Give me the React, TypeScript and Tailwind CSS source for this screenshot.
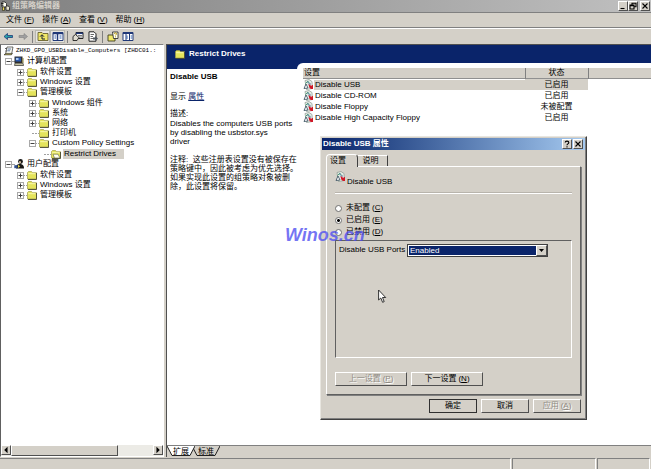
import React from 'react';

const NAVY = 'bg-[#0a246a]';
const RAISED = 'border border-t-white border-l-white border-r-[#505050] border-b-[#505050] bg-[#d4d0c8]';

interface Node {
  label: string;
  icon: 'folder' | 'open' | 'computer' | 'user';
  toggle?: '+' | '-';
  selected?: boolean;
  children?: Node[];
}

const tree: Node[] = [
  {
    label: '计算机配置',
    icon: 'computer',
    toggle: '-',
    children: [
      { label: '软件设置', icon: 'folder', toggle: '+' },
      { label: 'Windows 设置', icon: 'folder', toggle: '+' },
      {
        label: '管理模板',
        icon: 'folder',
        toggle: '-',
        children: [
          { label: 'Windows 组件', icon: 'folder', toggle: '+' },
          { label: '系统', icon: 'folder', toggle: '+' },
          { label: '网络', icon: 'folder', toggle: '+' },
          { label: '打印机', icon: 'folder' },
          {
            label: 'Custom Policy Settings',
            icon: 'folder',
            toggle: '-',
            children: [{ label: 'Restrict Drives', icon: 'open', selected: true }]
          }
        ]
      }
    ]
  },
  {
    label: '用户配置',
    icon: 'user',
    toggle: '-',
    children: [
      { label: '软件设置', icon: 'folder', toggle: '+' },
      { label: 'Windows 设置', icon: 'folder', toggle: '+' },
      { label: '管理模板', icon: 'folder', toggle: '+' }
    ]
  }
];

const settings = [
  { name: 'Disable USB', state: '已启用', selected: true },
  { name: 'Disable CD-ROM', state: '已启用' },
  { name: 'Disable Floppy', state: '未被配置' },
  { name: 'Disable High Capacity Floppy', state: '已启用' }
];

const menus = [
  { label: '文件', hotkey: 'F' },
  { label: '操作', hotkey: 'A' },
  { label: '查看', hotkey: 'V' },
  { label: '帮助', hotkey: 'H' }
];

const FolderIcon = ({ open = false }: { open?: boolean }) => (
  <svg className="h-[9px] w-[10px] shrink-0" viewBox="0 0 10 9">
    <path d="M.5 8V1.5L1.5.5h3l1 1.2h4V8z" fill="#e4e45c" stroke="#a09c48" strokeWidth=".7" />
    <path d="M1.2 2.7h7.2" stroke="#ffffc0" strokeWidth=".8" />
    <path d="M9.5 2v6.5H1" fill="none" stroke="#4a4a30" strokeWidth=".9" />
    {open && <path d="M2 4.2h5L9 8H3.5z" fill="#fffff0" stroke="#606040" strokeWidth=".6" />}
  </svg>
);

const ComputerIcon = () => (
  <svg className="h-[10px] w-[10px] shrink-0" viewBox="0 0 10 10">
    <path d="M.5.5h8v6.7h-8z" fill="#303030" />
    <path d="M1.5 1.5h5.5v4H1.5z" fill="#2858b0" />
    <path d="M2 2h2.5v2H2z" fill="#a8c8f0" />
    <path d="M1 7.2h8L9.6 9.5H.5z" fill="#c8c4a0" stroke="#303030" strokeWidth=".7" />
    <path d="M9 2v5" stroke="#8c8430" />
  </svg>
);

const UserIcon = () => (
  <svg className="h-[10px] w-[10px] shrink-0" viewBox="0 0 10 10">
    <circle cx="6.5" cy="2.5" r="2.4" fill="#181818" />
    <path d="M5 2.3h1.8v2H5.4z" fill="#f0d8b8" />
    <path d="M2 9.5C2.2 5.5 4 5 6 5s4 1 4 4.5z" fill="#181818" />
    <path d="M.3 6.2h3.2v3H.3z" fill="#305090" />
    <path d="M4 5.8l2.2 1.5L4 9z" fill="#e8d850" />
  </svg>
);

const PolicyIcon = () => (
  <svg className="h-[11px] w-[11px] shrink-0" viewBox="0 0 11 11">
    <path d="M2 1.5l4-1 3 2 .5 7-6 1z" fill="#e4eae4" stroke="#8a9a90" strokeWidth=".7" />
    <path d="M2.5 4.5l2.3-2.3 2 2.5" fill="none" stroke="#389868" strokeWidth=".9" />
    <path d="M1 9.5l2-4.5 2 4z" fill="#fff" stroke="#304858" strokeWidth=".8" />
    <path d="M4 3.2h2M5 5h3" stroke="#5878a8" strokeWidth=".8" />
    <path d="M5.5 5.5H7L8 7l1.5-1H10v4H8L6.5 9z" fill="#d01828" />
  </svg>
);

const ScrollIcon = () => (
  <svg className="h-[10px] w-[10px] shrink-0" viewBox="0 0 10 10">
    <path d="M3 1h6L7.5 8.5H1.5z" fill="#fffff4" stroke="#303030" strokeWidth=".7" />
    <path d="M0 8.8h7.4l1-1.4H2z" fill="#f0e060" stroke="#303030" strokeWidth=".7" />
    <path d="M3.6 3h3.6M3.2 4.8h3" stroke="#305090" strokeWidth=".8" />
    <path d="M1 2.5h2M1.4 5h1.5" stroke="#404040" strokeWidth=".8" />
  </svg>
);

const AppIcon = () => (
  <svg className="h-[10px] w-[10px] shrink-0" viewBox="0 0 10 10">
    <path d="M2 1h3l1.5 1.5V6H2z" fill="#fffff4" stroke="#202020" strokeWidth=".8" />
    <path d="M1 2.5h2.5M1.5 4.2h2" stroke="#202020" />
    <path d="M2.5 6h2v3.5h-2z" fill="#e8d850" stroke="#202020" strokeWidth=".6" />
    <path d="M6 5h2.5l1 1.5v2.8H6z" fill="#e8e4d0" stroke="#202020" strokeWidth=".8" />
  </svg>
);

const icons = {
  folder: <FolderIcon />,
  open: <FolderIcon open />,
  computer: <ComputerIcon />,
  user: <UserIcon />
};

const TreeItem: React.FC<{ node: Node; root?: boolean }> = ({ node, root }) => (
  <li>
    <div className="flex h-[10px] items-center">
      {node.toggle ? (
        <button
          aria-label={`${node.toggle === '+' ? '展开' : '折叠'} ${node.label}`}
          className="flex h-[7px] w-[7px] shrink-0 items-center justify-center border border-[#a8a8a8] bg-white"
        >
          <svg className="h-[5px] w-[5px]" viewBox="0 0 5 5" stroke="#404040" strokeWidth="1">
            <path d={node.toggle === '+' ? 'M.5 2.5h4M2.5.5v4' : 'M.5 2.5h4'} />
          </svg>
        </button>
      ) : (
        <span className="ml-[3px] h-px w-1 border-t border-dotted border-[#a0a0a0]" />
      )}
      <span className={`h-px shrink-0 border-t border-dotted border-[#a0a0a0] ${root ? 'w-[2px]' : 'w-[3px]'}`} />
      {icons[node.icon]}
      <span className={`ml-[2px] px-px leading-[10px] ${node.selected ? 'bg-[#d4d0c8] pr-2' : ''}`}>
        {node.label}
      </span>
    </div>
    {node.children && (
      <ul className="ml-3 pt-px">
        {node.children.map((child) => (
          <TreeItem key={child.label} node={child} />
        ))}
      </ul>
    )}
  </li>
);

const Key = ({ k }: { k: string }) => (
  <span className="ml-[2px]">
    (<u>{k}</u>)
  </span>
);

const Separator = () => <span className="mx-[2px] h-3 w-px bg-[#808080]" />;

const ToolButton: React.FC<{ label: string; pressed?: boolean; children: React.ReactNode }> = ({
  label,
  pressed,
  children
}) => (
  <button
    aria-label={label}
    className={`flex h-[13px] w-[15px] items-center justify-center ${pressed ? 'border border-[#b8b8b0] bg-[#e6e4de]' : ''}`}
  >
    <svg className="h-[11px] w-3 shrink-0" viewBox="0 0 12 11">
      {children}
    </svg>
  </button>
);

const Toolbar = () => (
  <div className="flex h-4 items-center border-t border-white">
    <ToolButton label="后退">
      <path d="M2 5.5l3.5-3v2h5v2h-5v2z" fill="#28a0a8" stroke="#203878" strokeWidth=".8" />
    </ToolButton>
    <ToolButton label="前进">
      <path d="M10.5 5.5L7 2.5v2H2v2h5v2z" fill="#a0a0a0" stroke="#808080" strokeWidth=".6" />
    </ToolButton>
    <Separator />
    <ToolButton label="向上一级" pressed>
      <path d="M1 9.5v-8h4l1 1h5v7z" fill="#f0e868" stroke="#585020" strokeWidth=".8" />
      <path d="M5 8V4M3 5.7l2-2 2 2M5 8h3" fill="none" stroke="#182030" />
    </ToolButton>
    <ToolButton label="显示/隐藏控制台树" pressed>
      <path d="M1 1.5h10v8H1z" fill="#fff" stroke="#203878" />
      <path d="M1 2.5h10M5.5 2v7" stroke="#203878" strokeWidth="1.5" />
      <path d="M2.5 5h1.5M2.5 7h1.5M7.5 5h2M7.5 7h2" stroke="#3060b0" />
    </ToolButton>
    <Separator />
    <ToolButton label="属性">
      <path d="M4 1.5h7v6H4z" fill="#fff" stroke="#202020" />
      <path d="M4 2.3h7" stroke="#203878" strokeWidth="1.5" />
      <path d="M6 4.5h4M7 6h3" stroke="#404040" strokeWidth=".7" />
      <path d="M1 5.5l2.5-2 3.5 3-2 3H1z" fill="#e0dcd0" stroke="#202020" strokeWidth=".9" />
    </ToolButton>
    <ToolButton label="导出列表">
      <path d="M2 .8h5l2 2v7.4H2z" fill="#fff" stroke="#202020" />
      <path d="M3.5 3.5H7M3.5 5.5H6M3.5 7.5H6" stroke="#404040" strokeWidth=".8" />
      <path d="M6 6.5h2V5l3 2.5L8 10V8.5H6z" fill="#505860" />
    </ToolButton>
    <Separator />
    <ToolButton label="帮助">
      <path d="M1 4h7v6H1z" fill="#f0e868" stroke="#404020" strokeWidth=".9" />
      <path d="M5.5 1h5.5v6.5H6.5z" fill="#fffff0" stroke="#202020" strokeWidth=".8" />
      <path d="M7.3 2.8c0-1.4 2.4-1.2 2.2.2-.1.7-1 .8-1 1.4M8.5 5.4v.9" fill="none" stroke="#b09000" />
    </ToolButton>
    <ToolButton label="显示窗格">
      <path d="M1 1.5h10v8H1z" fill="#fff" stroke="#203878" />
      <path d="M1 2.5h10M7.5 2v7M4 2v7" stroke="#203878" />
      <path d="M5 4.5v3.5M8.7 5h1.5M8.7 7h1.5" stroke="#3060b0" />
    </ToolButton>
  </div>
);

const TitleButton: React.FC<{ label: string; d: string; fill?: string; className?: string }> = ({
  label,
  d,
  fill = 'none',
  className = ''
}) => (
  <button aria-label={label} className={`flex h-[10px] w-[10px] shrink-0 items-center justify-center ${RAISED} ${className}`}>
    <svg className="h-2 w-2" viewBox="0 0 8 8" fill={fill} stroke="#000" strokeWidth="1.1">
      <path d={d} />
    </svg>
  </button>
);

const CLOSE = 'M1.5 1.5l5 5M6.5 1.5l-5 5';

const Dialog = () => (
  <section
    role="dialog"
    aria-labelledby="dialog-title"
    className="absolute top-[136px] left-[320px] w-[267px] border border-t-[#e8e6e0] border-l-[#e8e6e0] border-r-[#404040] border-b-[#404040] bg-[#d4d0c8] p-px shadow-[inset_-1px_-1px_0_#808080]"
  >
    <header className="flex h-3 items-center bg-gradient-to-r from-[#0a246a] to-[#a6caf0] pr-[2px] text-white">
      <h2 id="dialog-title" className="flex-1 pl-px font-bold">
        Disable USB 属性
      </h2>
      <TitleButton label="帮助" d="M2.2 2.6c0-2 3.6-2 3.6 0C5.8 4 4 3.8 4 5.2M4 6.2v1.2" />
      <TitleButton label="关闭" d={CLOSE} className="ml-px" />
    </header>

    <div className="px-1 pt-1 pb-[5px]">
      <div role="tablist" className="flex h-3 items-end">
        <button
          role="tab"
          aria-selected="true"
          className="relative -mb-px h-[13px] w-8 rounded-t-sm border border-b-0 border-t-white border-l-white border-r-[#404040] bg-[#d4d0c8] pr-2"
        >
          设置
        </button>
        <button role="tab" aria-selected="false" className="h-[11px] w-[30px] border-t border-r border-t-white border-r-[#404040] pr-1">
          说明
        </button>
      </div>

      <div className="border border-t-white border-l-white border-r-[#606060] border-b-[#606060] px-2 pt-1 pb-2 shadow-[1px_1px_0_#808080]">
        <div className="flex h-4 items-start">
          <PolicyIcon />
          <span className="self-end pl-px">Disable USB</span>
        </div>
        <hr className="mt-[5px] border-t border-[#b8b4ac] shadow-[0_1px_0_#fff]" />

        <fieldset className="mt-[9px]">
          {[
            ['未配置', 'C'],
            ['已启用', 'E'],
            ['已禁用', 'D']
          ].map(([label, hotkey]) => (
            <label key={hotkey} className="flex h-[12px] items-center">
              <input
                type="radio"
                name="state"
                defaultChecked={hotkey === 'E'}
                className="mr-1 h-[7px] w-[7px] appearance-none rounded-full border border-[#707070] bg-white checked:bg-[radial-gradient(#000_35%,#fff_45%)]"
              />
              {label}
              <Key k={hotkey} />
            </label>
          ))}
        </fieldset>

        <div className="mt-[2px] h-[118px] border border-t-[#606060] border-l-[#606060] border-r-white border-b-white px-[3px] pt-[3px]">
          <div className="flex h-3 items-center">
            <label htmlFor="ports" className="w-[68px]">
              Disable USB Ports
            </label>
            <div className="relative w-[141px] border border-[#404040] bg-white p-px">
              <select id="ports" className={`block h-[9px] w-full appearance-none ${NAVY} pl-px leading-[9px] text-white`}>
                <option>Enabled</option>
                <option>Disabled</option>
              </select>
              <span className={`pointer-events-none absolute inset-y-0 right-0 flex w-[11px] items-center justify-center ${RAISED}`}>
                <svg className="h-[3px] w-[5px]" viewBox="0 0 5 3">
                  <path d="M0 0h5L2.5 3z" />
                </svg>
              </span>
            </div>
          </div>
        </div>

        <div className="mt-[14px] flex gap-1">
          <button disabled className={`h-[14px] w-[72px] text-[#908c84] [text-shadow:1px_1px_0_#fff] ${RAISED}`}>
            上一设置
            <Key k="P" />
          </button>
          <button className={`h-[14px] w-[72px] ${RAISED}`}>
            下一设置
            <Key k="N" />
          </button>
        </div>
      </div>

      <footer className="mt-1 flex justify-end gap-1">
        <button className={`h-[14px] w-12 outline outline-1 -outline-offset-1 outline-[#303030] ${RAISED}`}>确定</button>
        <button className={`h-[14px] w-12 ${RAISED}`}>取消</button>
        <button disabled className={`h-[14px] w-12 text-[#908c84] [text-shadow:1px_1px_0_#fff] ${RAISED}`}>
          应用
          <Key k="A" />
        </button>
      </footer>
    </div>
  </section>
);

const Cursor = () => (
  <svg className="pointer-events-none absolute top-[289px] left-[378px] h-[15px] w-[9px]" viewBox="0 0 9 15">
    <path d="M.6 1v10l2.2-2 1.8 4.3 1.6-.7L4.5 8.5h3.2z" fill="#fff" stroke="#202020" strokeWidth=".9" />
  </svg>
);

const ViewTabs = () => (
  <div role="tablist" className="flex h-3 border-t border-[#808080] bg-[#d4d0c8]">
    {['扩展', '标准'].map((label, i) => (
      <button
        key={label}
        role="tab"
        aria-selected={i === 0}
        className={`relative h-[11px] w-7 ${i === 0 ? 'z-[1]' : '-ml-[3px]'}`}
      >
        <svg className="absolute inset-0 h-full w-full" viewBox="0 0 28 11">
          <path d="M0 0l5 9.5h18L28 0" fill={i === 0 ? '#fff' : '#d4d0c8'} stroke="#202020" />
        </svg>
        <span className="relative block leading-[9px]">{label}</span>
      </button>
    ))}
  </div>
);

const App: React.FC = () => {
  return (
    <main className="relative flex h-screen flex-col overflow-hidden bg-[#d4d0c8] font-['Liberation_Sans','Noto_Sans_CJK_SC',sans-serif] text-[8px] leading-[10px] whitespace-nowrap text-black">
      {/* Title bar */}
      <header className="flex h-3 shrink-0 items-center bg-gradient-to-r from-[#808080] to-[#c0c0c0] pr-px text-[#d4d0c8]">
        <AppIcon />
        <h1 className="flex-1 pl-[2px] font-bold">组策略编辑器</h1>
        <TitleButton label="最小化" d="M1.5 6.5h4" />
        <TitleButton label="还原" d="M3 3V1.3h4v3.5H5.2M1 3h4v4H1zM1 3.7h4" />
        <TitleButton label="关闭" d={CLOSE} className="ml-[2px]" />
      </header>

      <nav className="flex h-4 shrink-0 items-center gap-2 border-t border-b border-t-[#808080] border-b-[#808080] px-[6px]">
        {menus.map((menu) => (
          <button key={menu.hotkey}>
            {menu.label}
            <Key k={menu.hotkey} />
          </button>
        ))}
      </nav>

      <Toolbar />

      <div className="flex min-h-0 flex-1">
        {/* Console tree */}
        <aside className="flex w-[164px] shrink-0 flex-col border border-t-[#808080] border-l-[#606060] border-r-white border-b-white bg-white">
          <div className="min-h-0 flex-1 pt-px">
            <div className="flex h-[10px] items-center pl-[3px]">
              <ScrollIcon />
              <span className="pl-[2px] font-['Liberation_Mono',monospace] text-[6px]">
                ZHKD_GPO_USBDisable_Computers [ZHDC01.:
              </span>
            </div>
            <ul className="pl-1">
              {tree.map((node) => (
                <TreeItem key={node.label} node={node} root />
              ))}
            </ul>
          </div>
          <div className="flex h-[11px] bg-[#ecebe6]">
            <TitleButton label="向左滚动" d="M5 2v4L3 4z" fill="#000" />
            <span className={`w-[107px] ${RAISED}`} />
            <span className="flex-1" />
            <TitleButton label="向右滚动" d="M3 2v4l2-2z" fill="#000" />
          </div>
        </aside>

        {/* Details */}
        <div className="ml-[2px] flex min-w-0 flex-1 flex-col border-t border-l border-[#505050] bg-white">
          <div className={`flex h-[18px] shrink-0 items-center pl-2 font-bold text-white ${NAVY}`}>
            <FolderIcon />
            <h2 className="pl-1">Restrict Drives</h2>
          </div>
          <div className="flex min-h-0 flex-1">
            <div className={`flex w-[130px] shrink-0 flex-col pt-[6px] ${NAVY}`}>
              <div className="flex-1 bg-white px-[3px] pt-[3px]">
                <h3 className="font-bold">Disable USB</h3>
                <p className="mt-[10px]">
                  显示{' '}
                  <a href="#properties" className="text-[#0a246a] underline">
                    属性
                  </a>
                </p>
                <p className="mt-[7px]">描述:</p>
                <p className="leading-[9px]">
                  Disables the computers USB ports
                  <br />
                  by disabling the usbstor.sys
                  <br />
                  driver
                </p>
                <p className="mt-[9px] leading-[9px]">
                  注释: &nbsp;这些注册表设置没有被保存在
                  <br />
                  策略键中，因此被考虑为优先选择。
                  <br />
                  如果实现此设置的组策略对象被删
                  <br />
                  除，此设置将保留。
                </p>
              </div>
            </div>
            <div className={`min-w-0 flex-1 ${NAVY}`}>
              <div className="h-full rounded-tl-md bg-white pt-[5px] pl-[6px]">
                <table className="w-full table-fixed border-collapse">
                  <thead>
                    <tr className="h-[10px] border-b border-[#909090] bg-[#d4d0c8]">
                      <th className="w-[222px] border-r border-[#808080] p-0 pl-px text-left font-normal">设置</th>
                      <th className="w-[63px] border-r border-[#808080] p-0 font-normal">状态</th>
                      <th className="p-0" />
                    </tr>
                  </thead>
                  <tbody>
                    {settings.map((s) => (
                      <tr key={s.name} className="h-[11px]">
                        <td className="p-0">
                          <span className="flex h-[11px] items-center">
                            <PolicyIcon />
                            <span className={`flex-1 pl-px ${s.selected ? 'bg-[#d4d0c8]' : ''}`}>{s.name}</span>
                          </span>
                        </td>
                        <td className={`p-0 text-center ${s.selected ? 'bg-[#d4d0c8]' : ''}`}>{s.state}</td>
                        <td />
                      </tr>
                    ))}
                  </tbody>
                </table>
              </div>
            </div>
          </div>
          <ViewTabs />
        </div>
      </div>

      {/* Status bar */}
      <footer className="mt-px flex h-[11px] shrink-0 gap-px pr-px">
        <span className="flex-1 border-t border-r border-t-[#808080] border-r-white" />
        <span className="w-[84px] border-t border-r border-l border-t-[#808080] border-r-white border-l-[#808080]" />
        <span className="w-[53px] border-t border-r border-l border-t-[#808080] border-r-white border-l-[#808080]" />
      </footer>

      <Dialog />
      <Cursor />
      <p className="pointer-events-none absolute top-[224px] left-[285px] text-[18px] leading-[22px] font-bold text-[#4848f0]/75 italic">
        Winos.cn
      </p>
    </main>
  );
};

export default App;
